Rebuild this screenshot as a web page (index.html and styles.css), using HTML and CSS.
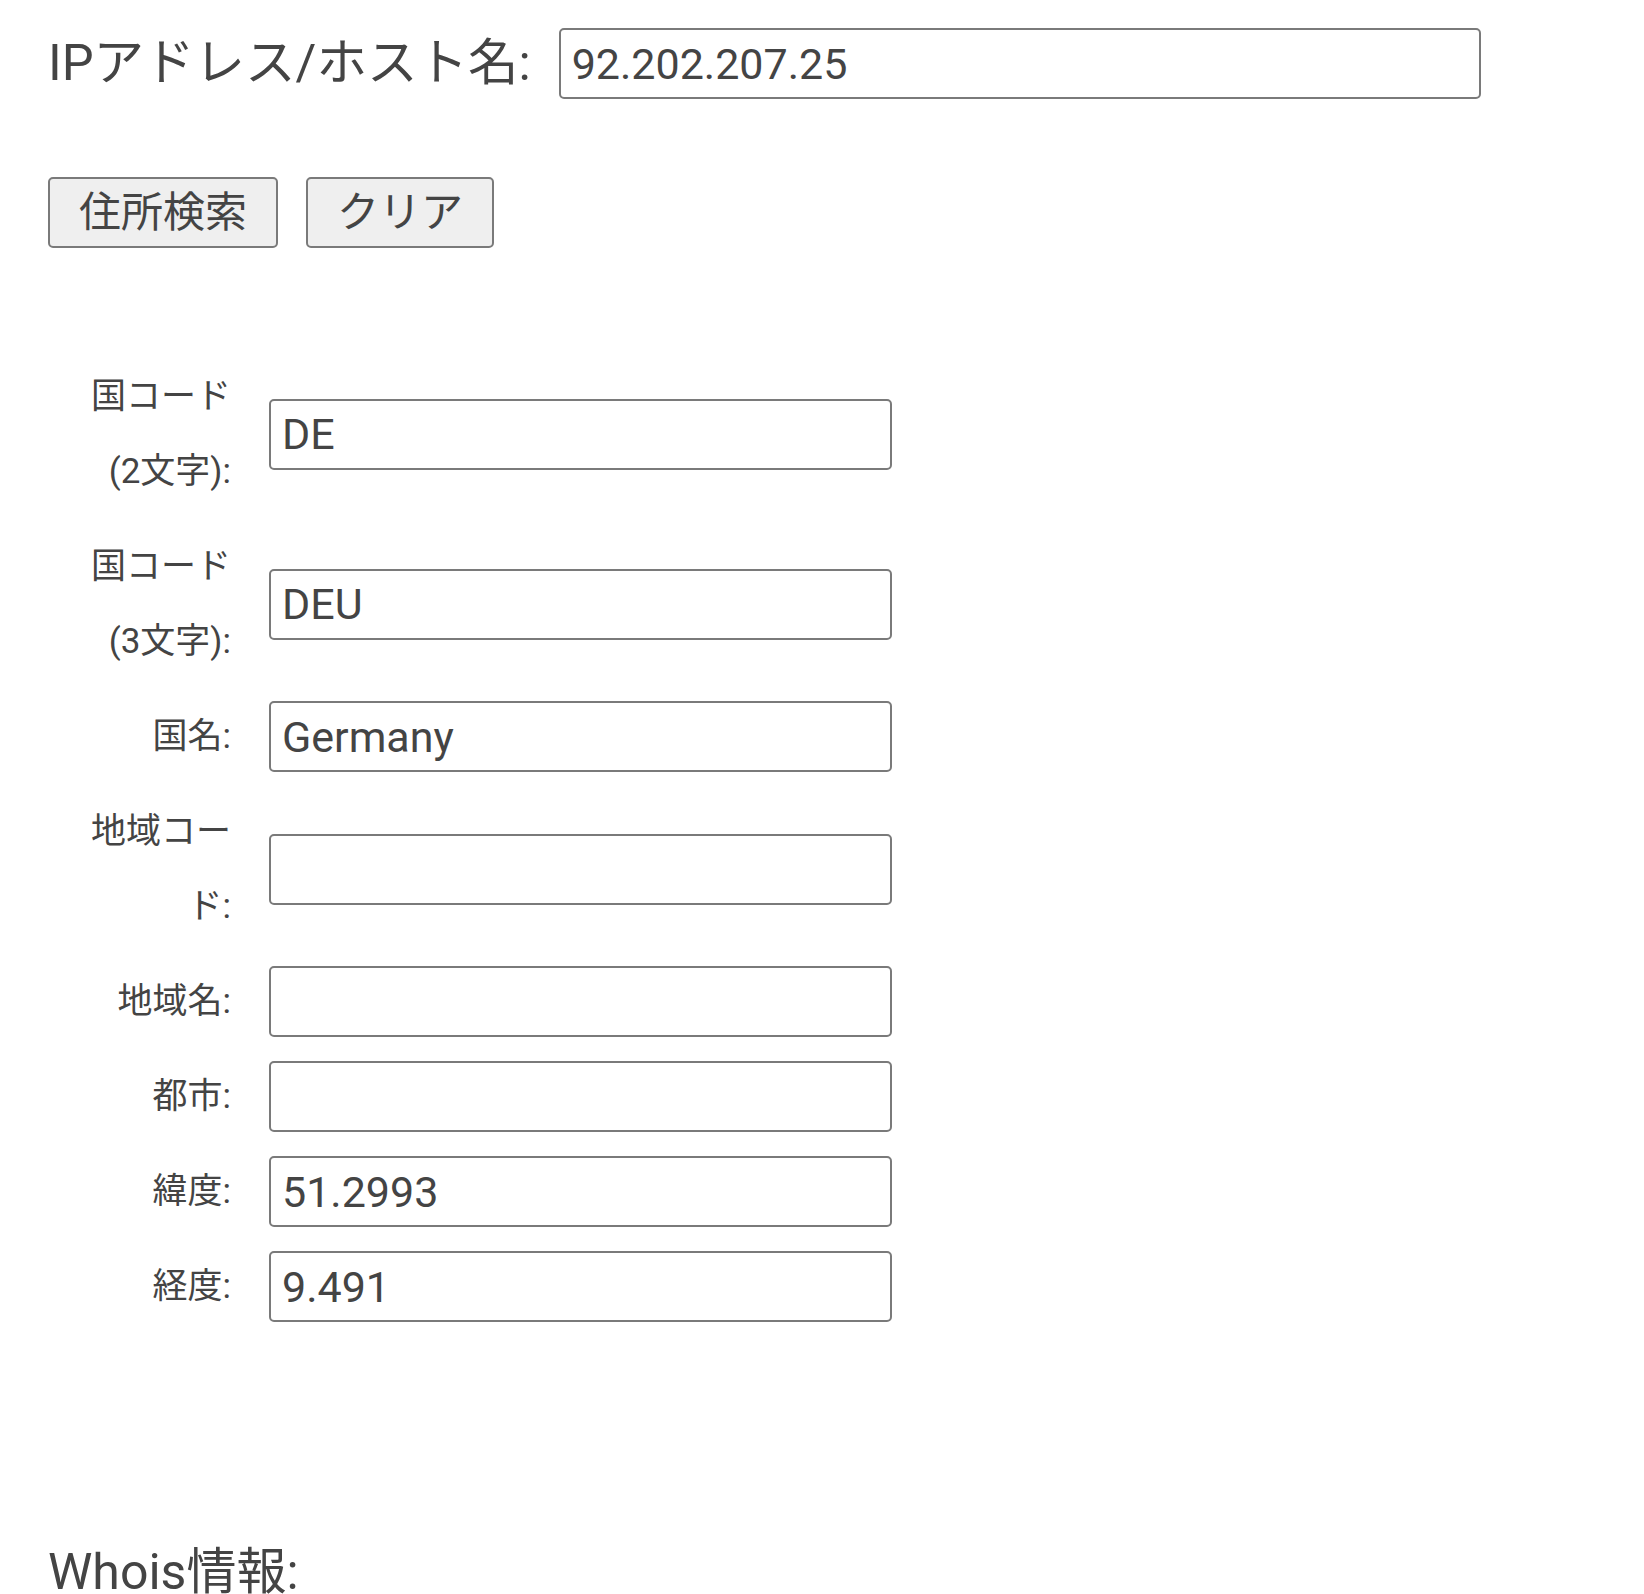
FILE: index.html
```html
<!DOCTYPE html>
<html lang="ja">
<head>
<meta charset="utf-8">
<title>IPアドレス住所検索</title>
<link rel="stylesheet" href="styles.css">
</head>
<body>
<div class="page">
  <div class="ip-row">
    <label class="ip-label" for="ip">IPアドレス/ホスト名:</label>
    <input class="ip-input" id="ip" type="text" value="92.202.207.25">
  </div>
  <div class="buttons">
    <button class="btn btn-search" type="button">住所検索</button>
    <button class="btn btn-clear" type="button">クリア</button>
  </div>
  <div class="result">
    <label class="f-label">国コード(2文字):</label>
    <input class="f-input" type="text" value="DE">
    <label class="f-label">国コード(3文字):</label>
    <input class="f-input" type="text" value="DEU">
    <label class="f-label">国名:</label>
    <input class="f-input" type="text" value="Germany">
    <label class="f-label">地域コード:</label>
    <input class="f-input" type="text" value="">
    <label class="f-label">地域名:</label>
    <input class="f-input" type="text" value="">
    <label class="f-label">都市:</label>
    <input class="f-input" type="text" value="">
    <label class="f-label">緯度:</label>
    <input class="f-input" type="text" value="51.2993">
    <label class="f-label">経度:</label>
    <input class="f-input" type="text" value="9.491">
  </div>
  <h2 class="whois">Whois情報:</h2>
</div>
</body>
</html>
```

FILE: styles.css
```css
html, body {
  margin: 0;
  padding: 0;
  background: #ffffff;
}

body {
  font-family: Roboto, "Noto Sans CJK JP", sans-serif;
  color: #444444;
}

.page {
  padding: 28px 0 0 48px;
}

.ip-row {
  display: flex;
  align-items: center;
  gap: 28px;
}

.ip-label {
  font-size: 50.5px;
  line-height: 1;
  color: #444444;
}

.ip-input {
  box-sizing: border-box;
  width: 922px;
  height: 71px;
  border: 2px solid #7a7a7a;
  border-radius: 5px;
  padding: 0 11px;
  font-family: Roboto, "Noto Sans CJK JP", sans-serif;
  font-size: 43px;
  color: #444444;
  background: #ffffff;
  outline: none;
}

.buttons {
  display: flex;
  gap: 28px;
  margin-top: 78px;
}

.btn {
  box-sizing: border-box;
  height: 71px;
  padding: 0 29px;
  border: 2px solid #7a7a7a;
  border-radius: 5px;
  background: #efefef;
  font-family: Roboto, "Noto Sans CJK JP", sans-serif;
  font-size: 42px;
  line-height: 1;
  color: #444444;
}

.result {
  display: grid;
  grid-template-columns: 142px 623px;
  column-gap: 38px;
  row-gap: 20px;
  align-items: center;
  margin-top: 111px;
  margin-left: 41px;
}

.f-label {
  font-size: 35px;
  line-height: 75px;
  text-align: right;
  color: #444444;
}

.f-input {
  box-sizing: border-box;
  width: 623px;
  height: 71px;
  border: 2px solid #7a7a7a;
  border-radius: 5px;
  padding: 0 11px;
  font-family: Roboto, "Noto Sans CJK JP", sans-serif;
  font-size: 43px;
  color: #444444;
  background: #ffffff;
  outline: none;
}

.whois {
  margin: 218px 0 0 0;
  font-size: 50px;
  font-weight: normal;
  line-height: 1.2;
  color: #444444;
}
```
